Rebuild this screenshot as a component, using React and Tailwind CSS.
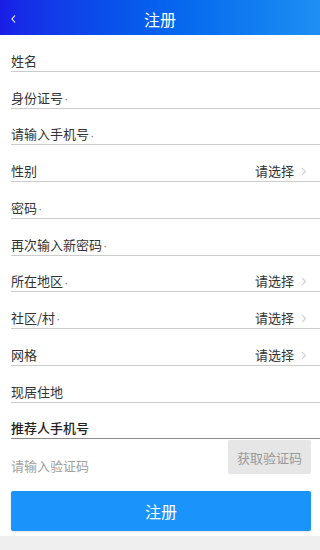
import React from 'react'

const rows = [
  { label: '姓名' },
  { label: '身份证号', dot: true },
  { label: '请输入手机号', dot: true },
  { label: '性别', select: true },
  { label: '密码', dot: true },
  { label: '再次输入新密码', dot: true },
  { label: '所在地区', dot: true, select: true },
  { label: '社区/村', dot: true, select: true },
  { label: '网格', select: true },
  { label: '现居住地' },
  { label: '推荐人手机号', strong: true },
]

const Arrow = () => (
  <svg width="6" height="9" viewBox="0 0 6 9" className="ml-[7px] mb-[4px]">
    <path d="M1 1l3.5 3.5L1 8" fill="none" stroke="#d2d2d2" strokeWidth="1.1" />
  </svg>
)

export default function App() {
  return (
    <div
      className="w-[320px] h-[550px] flex flex-col bg-white overflow-hidden"
      style={{ fontFamily: '"Noto Sans CJK SC", "Noto Sans", sans-serif' }}
    >
      <div className="h-[35px] shrink-0 flex items-center relative bg-gradient-to-r from-[#1a1de6] to-[#1e8ff2]">
        <svg width="8" height="10" viewBox="0 0 8 10" className="absolute left-[10px] top-[14px]">
          <path d="M5 1.5L2 5l3 3.5" fill="none" stroke="#fff" strokeWidth="1.1" />
        </svg>
        <div className="flex-1 text-center text-white text-[16px] leading-[20px] pt-[2px]">注册</div>
      </div>

      <div className="pl-[11px]">
        {rows.map((r, i) => (
          <div
            key={i}
            className={`h-[36.75px] flex items-end pb-[1px] border-b ${
              r.strong ? 'border-[#8a8a8a]' : 'border-[#cccccc]'
            }`}
          >
            <span
              className={`flex-1 text-[13px] leading-[18px] ${
                r.strong ? 'text-[#222] font-medium' : 'text-[#333]'
              }`}
            >
              {r.label}
              {r.dot && (
                <span className="ml-[1px] inline-block align-middle leading-[10px] text-[#888] font-['Liberation_Sans'] text-[13px]">
                  ·
                </span>
              )}
            </span>
            {r.select && (
              <div className="flex items-end pr-[13px]">
                <span className="text-[13px] leading-[18px] text-[#333]">请选择</span>
                <Arrow />
              </div>
            )}
          </div>
        ))}
      </div>

      <div className="h-[40px] flex items-start pl-[11px] pr-[9px]">
        <span className="flex-1 mt-[18px] text-[13px] leading-[18px] text-[#a0a0a0]">请输入验证码</span>
        <button className="mt-[1px] h-[34px] w-[83px] rounded-[2px] bg-[#e6e6e6] text-[13px] text-[#9a9a9a]">
          获取验证码
        </button>
      </div>

      <div className="px-[11px] mt-[12px]">
        <button className="w-[300px] h-[40px] rounded-[2px] bg-[#1a94fb] text-white text-[16px] shadow-sm">
          注册
        </button>
      </div>

      <div className="mt-[5px] flex-1 bg-[#efefef]" />
    </div>
  )
}
